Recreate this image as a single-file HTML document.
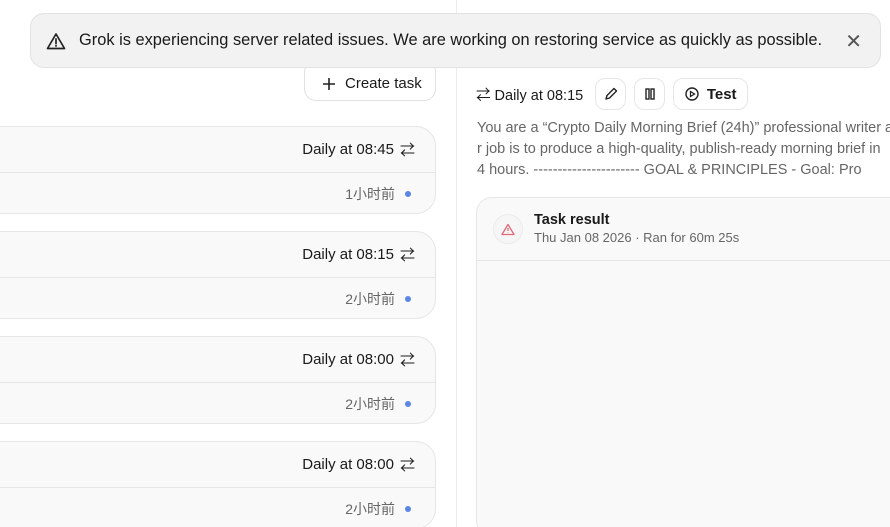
<!DOCTYPE html>
<html style="width:890px;height:527px;overflow:hidden"><head><meta charset="utf-8"><style>
*{box-sizing:border-box;margin:0;padding:0}
body{width:890px;height:527px;overflow:hidden;background:#fff;font-family:"Liberation Sans","Noto Sans CJK SC",sans-serif;color:#1a1a1a;position:relative}
.divider{position:absolute;left:456px;top:0;width:1px;height:527px;background:#ececec}
.banner{position:absolute;left:30px;top:13px;width:851px;height:55px;background:#f2f2f2;border:1px solid #e2e2e2;border-radius:14px;display:flex;align-items:center;padding-left:15px;font-size:16.4px;color:#1a1a1a;z-index:5}
.banner .x{position:absolute;right:18px;top:15px;font-size:20px;color:#555}
.create{position:absolute;left:304px;top:60px;width:132px;height:41px;border:1px solid #e2e2e2;border-radius:12px;background:#fff;font-size:15px;display:flex;align-items:center;padding:6px 0 0 18px;gap:10px}
.card{position:absolute;left:-20px;width:456px;height:88px;background:#f9f9f9;border:1px solid #e6e6e6;border-radius:20px}
.card .top{height:46px;border-bottom:1px solid #e6e6e6;display:flex;justify-content:flex-end;align-items:center;padding-right:20px;font-size:15px;gap:6px}
.card .bot{height:41px;display:flex;justify-content:flex-end;align-items:center;padding-right:24px;font-size:14px;color:#666;gap:10px}
.dot{width:6px;height:6px;border-radius:50%;background:#5b86e5}
.hdr{position:absolute;left:476px;top:78px;display:flex;align-items:center;gap:8px;font-size:14.5px}
.btn{height:32px;border:1px solid #e6e6e6;border-radius:10px;display:flex;align-items:center;justify-content:center;background:#fff}
.desc{position:absolute;left:477px;top:118px;width:430px;font-size:14.5px;color:#666;line-height:21px;white-space:nowrap}
.res{position:absolute;left:476px;top:197px;width:440px;height:340px;border:1px solid #e6e6e6;border-radius:16px;background:#f9f9f9}
.res .h{height:63px;border-bottom:1px solid #e6e6e6;position:relative}
</style></head><body>
<div class="divider"></div>
<div class="banner"><svg width="20" height="18" viewBox="0 0 20 18"><path d="M10 2 L18.5 16.5 H1.5 Z" fill="none" stroke="#222" stroke-width="1.7" stroke-linejoin="round"/><path d="M10 7v4.5M10 13.5v.6" stroke="#222" stroke-width="1.7" stroke-linecap="round"/></svg><span style="margin-left:13px">Grok is experiencing server related issues. We are working on restoring service as quickly as possible.</span><span class="x">✕</span></div>
<div class="create"><svg width="12" height="12"><path d="M6 0v12M0 6h12" stroke="#222" stroke-width="1.6"/></svg>Create task</div>

<div class="card" style="top:126px"><div class="top">Daily at 08:45 <span>⇄</span></div><div class="bot">1小时前<span class="dot"></span></div></div>
<div class="card" style="top:231px"><div class="top">Daily at 08:15 <span>⇄</span></div><div class="bot">2小时前<span class="dot"></span></div></div>
<div class="card" style="top:336px"><div class="top">Daily at 08:00 <span>⇄</span></div><div class="bot">2小时前<span class="dot"></span></div></div>
<div class="card" style="top:441px"><div class="top">Daily at 08:00 <span>⇄</span></div><div class="bot">2小时前<span class="dot"></span></div></div>

<div class="hdr"><span>⇄ Daily at 08:15</span>
<div class="btn" style="width:31px;margin-left:4px"><svg width="14" height="14" viewBox="0 0 14 14"><path d="M2 12l1-3.5L10 1.5l2.5 2.5L5.5 11Z" fill="none" stroke="#222" stroke-width="1.4" stroke-linejoin="round"/></svg></div>
<div class="btn" style="width:31px"><svg width="10" height="12"><rect x="1" y="1" width="3" height="10" fill="none" stroke="#222" stroke-width="1.4"/><rect x="6" y="1" width="3" height="10" fill="none" stroke="#222" stroke-width="1.4"/></svg></div>
<div class="btn" style="width:75px;gap:8px;font-weight:bold;font-size:15px"><svg width="14" height="14"><circle cx="7" cy="7" r="6" fill="none" stroke="#222" stroke-width="1.4"/><path d="M5.5 4.5v5l4-2.5z" fill="none" stroke="#222" stroke-width="1.3"/></svg>Test</div></div>
<div class="desc">You are a “Crypto Daily Morning Brief (24h)” professional writer a<br>r job is to produce a high-quality, publish-ready morning brief in<br>4 hours. ---------------------- GOAL &amp; PRINCIPLES - Goal: Pro</div>
<div class="res"><div class="h">
<div style="position:absolute;left:16px;top:16px;width:30px;height:30px;border-radius:50%;border:1px solid #eaeaea;background:#f6f6f6;display:flex;align-items:center;justify-content:center"><svg width="14" height="13" viewBox="0 0 14 13"><path d="M7 1.5L13 11.5H1Z" fill="none" stroke="#e06a7a" stroke-width="1.3" stroke-linejoin="round"/><path d="M7 5v3M7 9.6v.4" stroke="#e06a7a" stroke-width="1.3"/></svg></div>
<div style="position:absolute;left:57px;top:14px;font-size:14.5px;font-weight:bold">Task result</div>
<div style="position:absolute;left:57px;top:32px;font-size:13px;color:#666">Thu Jan 08 2026 · Ran for 60m 25s</div>
</div></div>
</body></html>
